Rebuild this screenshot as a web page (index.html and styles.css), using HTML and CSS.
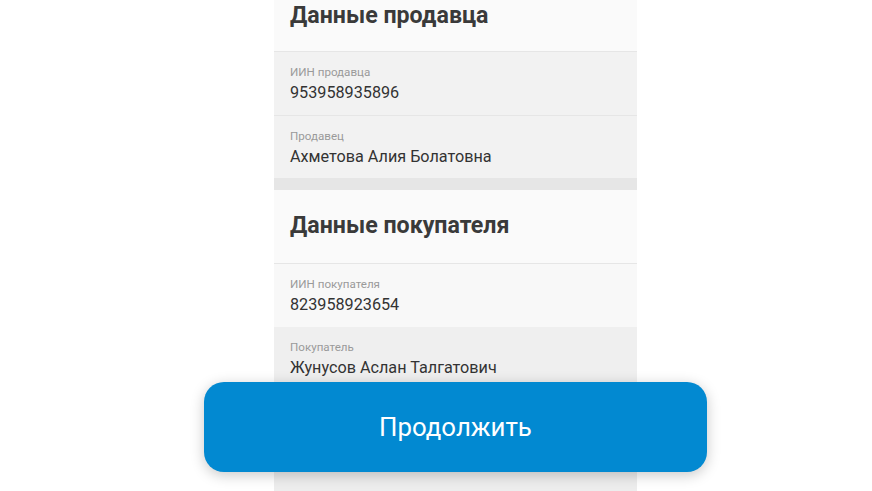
FILE: index.html
```html
<!DOCTYPE html>
<html lang="ru">
<head>
<meta charset="utf-8">
<link rel="stylesheet" href="styles.css">
</head>
<body>
<div class="panel">
  <div class="section-head first"><h2 class="title">Данные продавца</h2></div>
  <div class="field alt">
    <div class="label">ИИН продавца</div>
    <div class="value">953958935896</div>
  </div>
  <div class="field alt">
    <div class="label">Продавец</div>
    <div class="value">Ахметова Алия Болатовна</div>
  </div>
  <div class="band"></div>
  <div class="section-head second"><h2 class="title">Данные покупателя</h2></div>
  <div class="field light">
    <div class="label">ИИН покупателя</div>
    <div class="value">823958923654</div>
  </div>
  <div class="field dark">
    <div class="label">Покупатель</div>
    <div class="value">Жунусов Аслан Талгатович</div>
  </div>
</div>
<button class="continue">Продолжить</button>
</body>
</html>
```
FILE: styles.css
```css
html, body {
  margin: 0;
  padding: 0;
  background: #ffffff;
  font-family: Roboto, "Liberation Sans", sans-serif;
  overflow: hidden;
}
.panel {
  width: 363px;
  margin-left: 274px;
  min-height: 491px;
  background: #ededed;
  display: flex;
  flex-direction: column;
}
.section-head {
  background: #fafafa;
  padding: 2px 16px 22px;
  border-bottom: 1px solid #e6e6e6;
}
.section-head.second {
  padding: 22px 16px 24px;
}
.title {
  margin: 0;
  font-size: 23.2px;
  line-height: 27px;
  font-weight: 700;
  color: #3a3a3a;
}
.field {
  padding: 13px 16px 12px;
  border-bottom: 1px solid #e6e6e6;
}
.field.alt { background: #f2f2f2; }
.field.light { background: #f8f8f8; border-bottom: none; }
.field.dark { background: #efefef; border-bottom: none; }
.field.alt:nth-child(3) { border-bottom: none; padding-bottom: 11px; }
.label {
  font-size: 11.6px;
  line-height: 14px;
  color: #9a9a9a;
  margin-bottom: 4px;
}
.value {
  font-size: 16.2px;
  line-height: 20px;
  color: #333333;
}
.band {
  height: 12px;
  background: #e6e6e6;
}
.continue {
  position: absolute;
  left: 204px;
  top: 382px;
  width: 503px;
  height: 90px;
  border: none;
  border-radius: 20px;
  background: #0289d1;
  color: #ffffff;
  font-family: Roboto, "Liberation Sans", sans-serif;
  font-size: 25.8px;
  font-weight: 400;
  box-shadow: 0 3px 14px rgba(0, 0, 0, 0.22);
  cursor: pointer;
}
```
